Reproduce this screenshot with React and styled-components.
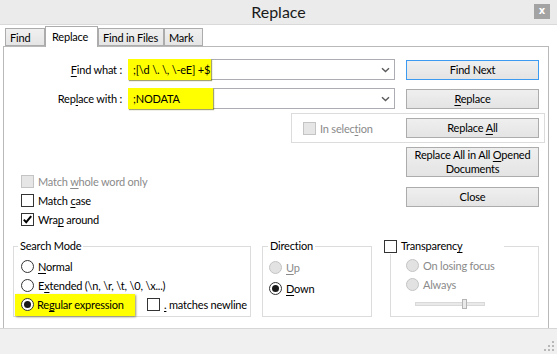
import React from 'react';
import styled, { createGlobalStyle } from 'styled-components';

const GlobalStyle = createGlobalStyle`
  html, body {
    margin: 0;
    padding: 0;
    background: #ffffff;
  }
  body {
    font-family: 'Lato', 'Open Sans', sans-serif;
    font-size: 11px;
    letter-spacing: -0.2px;
    color: #000000;
  }
  * {
    box-sizing: border-box;
  }
`;

function App() {
  return (
    <>
      <GlobalStyle />
      <Window>
        <TitleBar>
          <span />
          <Title>Replace</Title>
          <CloseButton>x</CloseButton>
        </TitleBar>

        <TabStrip>
          <Tab $width={40}>Find</Tab>
          <Tab $width={53} $active>Replace</Tab>
          <Tab $width={66}>Find in Files</Tab>
          <Tab $width={39}>Mark</Tab>
        </TabStrip>

        <Panel>
          <FieldRow $top={12}>
            <FieldLabel>
              <U>F</U>ind what :
            </FieldLabel>
            <Combo>
              <Highlight $width={83}>;[\d \. \, \-eE] +$</Highlight>
              <ComboArrow>{ChevronSVG}</ComboArrow>
            </Combo>
            <ActionButton $focused>
              <span>Find Next</span>
            </ActionButton>
          </FieldRow>

          <FieldRow $top={8}>
            <FieldLabel>
              Rep<U>l</U>ace with :
            </FieldLabel>
            <Combo>
              <Highlight $width={85}>;NODATA</Highlight>
              <ComboArrow>{ChevronSVG}</ComboArrow>
            </Combo>
            <ActionButton>
              <span>
                <U>R</U>eplace
              </span>
            </ActionButton>
          </FieldRow>

          <SelectionGroup>
            <Option $disabled>
              <CheckBox $disabled />
              <span>
                In selec<U>t</U>ion
              </span>
            </Option>
            <ActionButton $push>
              <span>
                Replace <U>A</U>ll
              </span>
            </ActionButton>
          </SelectionGroup>

          <MiddleRow>
            <CheckList>
              <Option $disabled $height={19}>
                <CheckBox $disabled />
                <span>
                  Match <U>w</U>hole word only
                </span>
              </Option>
              <Option $height={19}>
                <CheckBox />
                <span>
                  Match <U>c</U>ase
                </span>
              </Option>
              <Option $height={19}>
                <CheckBox>{CheckSVG}</CheckBox>
                <span>
                  Wra<U>p</U> around
                </span>
              </Option>
            </CheckList>
            <ButtonStack>
              <ActionButton $height={30}>
                <span>
                  Replace All in All <U>O</U>pened
                  <br />
                  Documents
                </span>
              </ActionButton>
              <ActionButton>
                <span>Close</span>
              </ActionButton>
            </ButtonStack>
          </MiddleRow>

          <GroupRow>
            <Group $width={238}>
              <Legend $shift={4}>Search Mode</Legend>
              <GroupBody $left={7} $top={3}>
                <Option $height={19}>
                  <RadioDot />
                  <span>
                    <U>N</U>ormal
                  </span>
                </Option>
                <Option $height={19}>
                  <RadioDot />
                  <span>
                    E<U>x</U>tended (\n, \r, \t, \0, \x...)
                  </span>
                </Option>
                <Option $height={19}>
                  <MarkedOption>
                    <RadioDot $checked />
                    <span>
                      Re<U>g</U>ular expression
                    </span>
                  </MarkedOption>
                  <Option $gap={4} $left={8}>
                    <CheckBox />
                    <span>
                      <U>.</U> matches newline
                    </span>
                  </Option>
                </Option>
              </GroupBody>
            </Group>

            <Group $width={110}>
              <Legend $shift={5}>Direction</Legend>
              <GroupBody $left={6} $top={3}>
                <Option $disabled $height={21}>
                  <RadioDot $disabled />
                  <span>
                    <U>U</U>p
                  </span>
                </Option>
                <Option $height={21}>
                  <RadioDot $checked />
                  <span>
                    <U>D</U>own
                  </span>
                </Option>
              </GroupBody>
            </Group>

            <Group $width={149}>
              <Legend $shift={-7} $width={120} $plain>
                <Option $gap={4}>
                  <CheckBox />
                  <span>
                    Transparenc<U>y</U>
                  </span>
                </Option>
              </Legend>
              <GroupBody $left={15} $top={2}>
                <Option $disabled $height={19}>
                  <RadioDot $disabled />
                  <span>On losing focus</span>
                </Option>
                <Option $disabled $height={19}>
                  <RadioDot $disabled />
                  <span>Always</span>
                </Option>
                <SliderTrack>
                  <SliderThumb style={{ left: 46 }} />
                </SliderTrack>
              </GroupBody>
            </Group>
          </GroupRow>
        </Panel>

        <StatusStrip>{GripSVG}</StatusStrip>
      </Window>
    </>
  );
}

export default App;

const ChevronSVG = (
  <svg width='9' height='6' viewBox='0 0 9 6' fill='none'>
    <path d='M1 1.2 4.5 4.5 8 1.2' stroke='#5a5a5a' strokeWidth='1.4' />
  </svg>
);

const CheckSVG = (
  <svg width='11' height='11' viewBox='0 0 11 11' fill='none'>
    <path d='M1.8 5.6 4.2 8.2 9.2 2.2' stroke='#000' strokeWidth='2' />
  </svg>
);

const GripSVG = (
  <svg width='11' height='11' viewBox='0 0 11 11'>
    <rect x='8' y='0' width='2' height='2' fill='#b8b8b8' />
    <rect x='4' y='4' width='2' height='2' fill='#b8b8b8' />
    <rect x='8' y='4' width='2' height='2' fill='#b8b8b8' />
    <rect x='0' y='8' width='2' height='2' fill='#b8b8b8' />
    <rect x='4' y='8' width='2' height='2' fill='#b8b8b8' />
    <rect x='8' y='8' width='2' height='2' fill='#b8b8b8' />
  </svg>
);

const Window = styled.div`
  width: 557px;
  height: 354px;
  display: flex;
  flex-direction: column;
  background: #ffffff;
  overflow: hidden;
`;

const TitleBar = styled.div`
  flex: none;
  height: 25px;
  display: grid;
  grid-template-columns: 1fr auto 1fr;
  align-items: center;
  background: #ebebeb;
  border-bottom: 1px solid #d9d9d9;
`;

const Title = styled.div`
  font-size: 16px;
  letter-spacing: 0;
  color: #1a1a1a;
  padding-bottom: 1px;
`;

const CloseButton = styled.div`
  justify-self: end;
  align-self: start;
  margin: 4px 7px 0 0;
  width: 16px;
  height: 15px;
  background: #a3a3a3;
  color: #ffffff;
  font-family: 'DejaVu Sans', sans-serif;
  font-size: 10px;
  font-weight: bold;
  letter-spacing: 0;
  display: flex;
  align-items: center;
  justify-content: center;
  padding-bottom: 2px;
`;

const TabStrip = styled.div`
  flex: none;
  height: 21px;
  display: flex;
  align-items: flex-end;
  padding-left: 5px;
  background: #ffffff;
`;

const Tab = styled.div`
  position: relative;
  width: ${(p) => p.$width}px;
  height: ${(p) => (p.$active ? 21 : 18)}px;
  margin-bottom: ${(p) => (p.$active ? -1 : 0)}px;
  z-index: ${(p) => (p.$active ? 1 : 0)};
  border: 1px solid #acacac;
  border-bottom: ${(p) => (p.$active ? 'none' : '1px solid #acacac')};
  background: ${(p) =>
    p.$active ? '#ffffff' : 'linear-gradient(#f0f0f0, #e5e5e5)'};
  padding: ${(p) => (p.$active ? '2px 0 0 6px' : '1px 0 0 4px')};
  line-height: 15px;
  white-space: nowrap;
`;

const Panel = styled.div`
  flex: none;
  height: 282px;
  margin: 0 8px 0 3px;
  border: 1px solid #b9b9b9;
  border-bottom: none;
  display: flex;
  flex-direction: column;
`;

const FieldRow = styled.div`
  display: flex;
  align-items: center;
  height: 21px;
  margin-top: ${(p) => p.$top}px;
`;

const FieldLabel = styled.div`
  width: 118px;
  text-align: right;
  white-space: nowrap;
`;

const U = styled.u`
  text-decoration: underline;
  text-underline-offset: 2px;
  text-decoration-thickness: 1px;
`;

const Combo = styled.div`
  margin-left: 6px;
  width: 267px;
  height: 21px;
  border: 1px solid #abadb3;
  background: #ffffff;
  display: flex;
  align-items: stretch;
`;

const Highlight = styled.div`
  width: ${(p) => p.$width}px;
  margin: -1px 0 -1px -1px;
  padding-left: 5px;
  background: #ffff00;
  box-shadow: 1px 1px 1px rgba(90, 90, 0, 0.55);
  display: flex;
  align-items: center;
  white-space: pre;
`;

const ComboArrow = styled.div`
  margin-left: auto;
  width: 17px;
  display: flex;
  align-items: center;
  justify-content: center;
`;

const ActionButton = styled.div`
  flex: none;
  width: 133px;
  height: ${(p) => p.$height || 20}px;
  margin-left: ${(p) => (p.$push ? 'auto' : '11px')};
  margin-right: ${(p) => (p.$push ? '5px' : '0')};
  border: 1px solid ${(p) => (p.$focused ? '#3c9bf0' : '#acacac')};
  background: linear-gradient(#efefef, #e4e4e4);
  display: flex;
  align-items: center;
  justify-content: center;
  text-align: center;
  line-height: 14px;
  white-space: nowrap;
`;

const SelectionGroup = styled.div`
  margin: 4px 0 0 287px;
  width: 254px;
  height: 30px;
  border: 1px solid #dcdcdc;
  display: flex;
  align-items: center;
  padding-left: 11px;
`;

const Option = styled.div`
  display: flex;
  align-items: center;
  gap: ${(p) => p.$gap || 4}px;
  margin-left: ${(p) => p.$left || 0}px;
  height: ${(p) => (p.$height ? `${p.$height}px` : 'auto')};
  color: ${(p) => (p.$disabled ? '#8a8a8a' : '#000000')};
  white-space: nowrap;
`;

const CheckBox = styled.span`
  flex: none;
  width: 13px;
  height: 13px;
  border: 1px solid ${(p) => (p.$disabled ? '#c4c4c4' : '#333333')};
  background: ${(p) => (p.$disabled ? '#e6e6e6' : '#ffffff')};
  display: inline-flex;
  align-items: center;
  justify-content: center;
`;

const RadioDot = styled.span`
  flex: none;
  width: 13px;
  height: 13px;
  border-radius: 50%;
  border: 1px solid ${(p) => (p.$disabled ? '#c4c4c4' : '#333333')};
  background: ${(p) => (p.$disabled ? '#e2e2e2' : '#ffffff')};
  display: inline-flex;
  align-items: center;
  justify-content: center;
  &::after {
    content: '';
    display: ${(p) => (p.$checked ? 'block' : 'none')};
    width: 7px;
    height: 7px;
    border-radius: 50%;
    background: #1a1a1a;
  }
`;

const MarkedOption = styled.div`
  flex: none;
  width: 120px;
  height: 22px;
  margin-left: -6px;
  padding-left: 6px;
  display: flex;
  align-items: center;
  gap: 3px;
  background: #ffff00;
  box-shadow: 1px 1px 2px rgba(60, 60, 0, 0.55);
`;

const MiddleRow = styled.div`
  display: flex;
  justify-content: space-between;
  margin-top: 4px;
`;

const CheckList = styled.div`
  display: flex;
  flex-direction: column;
  padding: 25px 0 0 17px;
`;

const ButtonStack = styled.div`
  display: flex;
  flex-direction: column;
  gap: 10px;
  margin-right: 9px;
`;

const GroupRow = styled.div`
  display: flex;
  gap: 11px;
  margin-top: 9px;
  padding-left: 9px;
  & > :last-child {
    margin-left: 7px;
  }
`;

const Group = styled.fieldset`
  margin: 0;
  padding: 0;
  min-width: 0;
  width: ${(p) => p.$width}px;
  height: 79px;
  border: 1px solid #dcdcdc;
`;

const Legend = styled.legend`
  margin-left: ${(p) => p.$shift}px;
  padding: ${(p) => (p.$plain ? '0' : '0 2px')};
  width: ${(p) => (p.$width ? `${p.$width}px` : 'auto')};
  line-height: 16px;
  background: #ffffff;
`;

const GroupBody = styled.div`
  display: flex;
  flex-direction: column;
  padding: ${(p) => p.$top}px 0 0 ${(p) => p.$left}px;
`;

const SliderTrack = styled.div`
  position: relative;
  margin: 8px 0 0 9px;
  width: 70px;
  height: 4px;
  border: 1px solid #d9d9d9;
  background: #e9e9e9;
`;

const SliderThumb = styled.div`
  position: absolute;
  top: -4px;
  width: 5px;
  height: 10px;
  border: 1px solid #b4b4b4;
  background: #e9e9e9;
`;

const StatusStrip = styled.div`
  flex: 1;
  background: #f0f0f0;
  border-top: 1px solid #d6d6d6;
  display: flex;
  justify-content: flex-end;
  align-items: flex-end;
  padding: 0 2px 2px 0;
`;
